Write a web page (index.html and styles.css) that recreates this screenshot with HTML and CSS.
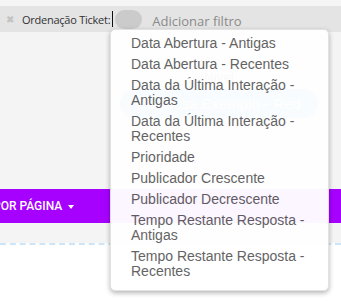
FILE: index.html
```html
<!DOCTYPE html>
<html lang="pt-BR">
<head>
  <meta charset="UTF-8">
  <meta name="viewport" content="width=device-width, initial-scale=1.0">
  <title>Tickets</title>
  <link rel="stylesheet" href="styles.css">
</head>
<body>
  <div class="top-strip"></div>

  <div class="filter-bar">
    <span class="filter-remove">&#10006;</span>
    <span class="filter-label">Ordenação Ticket:</span>
    <span class="caret-line"></span>
    <span class="filter-value"></span>
    <span class="add-filter">Adicionar filtro</span>
  </div>

  <div class="content">
    <div class="level-field">
      <span class="level-label">Nível</span>
      <span class="level-pill">Empresa Exemplo - Red</span>
    </div>

    <div class="page-bar">
      <span class="page-button">POR PÁGINA <span class="page-caret"></span></span>
    </div>
  </div>

  <div class="dashed-area"></div>

  <ul class="sort-menu">
    <li>Data Abertura - Antigas</li>
    <li>Data Abertura - Recentes</li>
    <li>Data da Última Interação - Antigas</li>
    <li>Data da Última Interação - Recentes</li>
    <li>Prioridade</li>
    <li>Publicador Crescente</li>
    <li>Publicador Decrescente</li>
    <li>Tempo Restante Resposta - Antigas</li>
    <li>Tempo Restante Resposta - Recentes</li>
  </ul>
</body>
</html>
```

FILE: styles.css
```css
* {
  box-sizing: border-box;
  margin: 0;
  padding: 0;
}

body {
  font-family: "Liberation Sans", Arial, sans-serif;
  background-color: #ffffff;
  color: #333;
  width: 341px;
  height: 302px;
  overflow: hidden;
}

.top-strip {
  height: 6px;
  background-color: #f5f5f5;
}

.filter-bar {
  display: flex;
  align-items: center;
  height: 26px;
  padding-left: 6px;
  background-color: #e4e4e4;
}

.filter-remove {
  font-size: 10px;
  line-height: 10px;
  color: #c2c2c2;
  width: 9px;
  margin-right: 7px;
  padding-top: 1px;
}

.filter-label {
  font-family: "Open Sans", sans-serif;
  font-size: 11px;
  color: #333;
  letter-spacing: -0.25px;
}

.caret-line {
  width: 1px;
  height: 16px;
  margin-left: 2px;
  background-color: #111;
}

.filter-value {
  width: 27px;
  height: 19px;
  margin-left: 2px;
  border-radius: 10px;
  background-color: #cbcbcb;
}

.add-filter {
  font-family: "Open Sans", sans-serif;
  font-size: 13px;
  color: #8a8a8a;
  margin-left: 10px;
  padding-top: 3px;
}

.content {
  height: 211px;
  padding-top: 38px;
  background-color: #f4f4f4;
}

.level-field {
  display: flex;
  flex-direction: column;
  align-items: center;
  width: 198px;
  margin-left: 120px;
  gap: 3px;
}

.level-label {
  font-size: 13px;
  line-height: 16px;
  color: #555;
}

.level-pill {
  width: 100%;
  height: 29px;
  line-height: 29px;
  text-align: center;
  border-radius: 15px;
  background-color: #5aaef5;
  color: #fff;
  font-size: 15px;
}

.page-bar {
  display: flex;
  align-items: center;
  height: 34px;
  margin-top: 71px;
  background-color: #a600ff;
  overflow: hidden;
}

.page-button {
  margin-left: -7px;
  font-family: Roboto, sans-serif;
  font-weight: 500;
  font-size: 12px;
  color: #fff;
  white-space: nowrap;
}

.page-caret {
  display: inline-block;
  width: 0;
  height: 0;
  margin-left: 3px;
  vertical-align: middle;
  border-left: 3px solid transparent;
  border-right: 3px solid transparent;
  border-top: 4px solid #fff;
}

.dashed-area {
  height: 59px;
  border-top: 2px dashed #cde5f7;
}

.sort-menu {
  position: absolute;
  top: 29px;
  left: 110px;
  width: 219px;
  padding: 3px 0 8px;
  list-style: none;
  background-color: #fff;
  border: 1px solid #e2e2e2;
  border-radius: 5px;
  box-shadow: 0 2px 5px rgba(0, 0, 0, 0.3);
  opacity: 0.965;
}

.sort-menu li {
  padding: 3px 20px;
  font-size: 14px;
  line-height: 15px;
  color: #5e5e5e;
}
```
